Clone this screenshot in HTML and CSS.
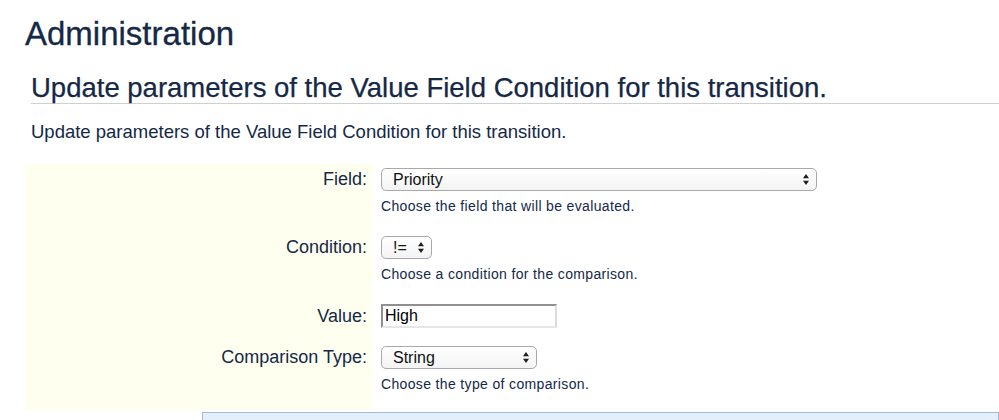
FILE: index.html
```html
<!DOCTYPE html>
<html lang="en">
<head>
<meta charset="utf-8">
<title>Administration</title>
<link rel="stylesheet" href="styles.css">
</head>
<body>
<div class="page">
  <h1 class="title">Administration</h1>
  <h2 class="subtitle">Update parameters of the Value Field Condition for this transition.</h2>
  <p class="intro">Update parameters of the Value Field Condition for this transition.</p>

  <div class="form">
    <div class="label">Field:</div>
    <div class="field">
      <div class="select select-wide"><span>Priority</span>
        <svg class="arrows" width="6" height="11" viewBox="0 0 6 11"><path d="M3 0 L6 4.2 L0 4.2 Z M0 6.8 L6 6.8 L3 11 Z" fill="#1e1e1e"/></svg>
      </div>
      <div class="desc">Choose the field that will be evaluated.</div>
    </div>

    <div class="label">Condition:</div>
    <div class="field">
      <div class="select select-small"><span>!=</span>
        <svg class="arrows" width="6" height="11" viewBox="0 0 6 11"><path d="M3 0 L6 4.2 L0 4.2 Z M0 6.8 L6 6.8 L3 11 Z" fill="#1e1e1e"/></svg>
      </div>
      <div class="desc">Choose a condition for the comparison.</div>
    </div>

    <div class="label label-input">Value:</div>
    <div class="field field-input">
      <div class="input">High</div>
    </div>

    <div class="label">Comparison Type:</div>
    <div class="field">
      <div class="select select-mid"><span>String</span>
        <svg class="arrows" width="6" height="11" viewBox="0 0 6 11"><path d="M3 0 L6 4.2 L0 4.2 Z M0 6.8 L6 6.8 L3 11 Z" fill="#1e1e1e"/></svg>
      </div>
      <div class="desc">Choose the type of comparison.</div>
    </div>
  </div>

  <div class="buttons"></div>
</div>
</body>
</html>
```

FILE: styles.css
```css
html, body {
  margin: 0;
  padding: 0;
  background: #ffffff;
  overflow: hidden;
}

body {
  font-family: "Liberation Sans", Arial, sans-serif;
  color: #172b4d;
}

.page {
  padding-left: 25px;
}

.title {
  margin: 14px 0 0 0;
  font-size: 33px;
  line-height: 40px;
  font-weight: normal;
  color: #142847;
  -webkit-text-stroke: 0.3px #142847;
}

.subtitle {
  margin: 18px 0 0 6px;
  font-size: 27.5px;
  line-height: 31px;
  font-weight: normal;
  color: #142847;
  -webkit-text-stroke: 0.25px #142847;
  border-bottom: 1px solid #cfcfcf;
}

.intro {
  margin: 17px 0 0 6px;
  font-size: 18.5px;
  line-height: 22px;
  color: #142847;
}

.form {
  margin-top: 21px;
  display: grid;
  grid-template-columns: 348px 1fr;
}

.label {
  background: #fffff0;
  text-align: right;
  padding: 4px 6px 18px 0;
  font-size: 18px;
  line-height: 23px;
  color: #142847;
}

.label-input {
  line-height: 24px;
  padding-bottom: 14px;
}

.field {
  padding: 4px 0 18px 8px;
}

.field-input {
  padding-bottom: 14px;
}

.select {
  box-sizing: border-box;
  height: 23px;
  display: flex;
  align-items: center;
  justify-content: space-between;
  padding: 0 7px 0 11px;
  border: 1px solid #a9a9a9;
  border-radius: 5px;
  background: linear-gradient(#ffffff, #f3f3f3);
  font-size: 16px;
  color: #111111;
}

.select-wide { width: 436px; }
.select-small { width: 51px; }
.select-mid { width: 156px; }

.arrows {
  display: block;
  flex: none;
}

.desc {
  margin-top: 7px;
  font-size: 14px;
  line-height: 16px;
  letter-spacing: 0.35px;
  color: #142847;
}

.input {
  box-sizing: border-box;
  width: 176px;
  height: 24px;
  padding: 0 0 0 2px;
  border-style: solid;
  border-width: 2px;
  border-color: #8f8f8f #dcdcdc #e6e6e6 #8f8f8f;
  font-size: 16px;
  line-height: 20px;
  color: #000000;
  background: #ffffff;
}

.buttons {
  margin: 2px 0 0 177px;
  height: 7px;
  border: 1px solid #a3badb;
  border-bottom: 0;
  background: #e4effc;
}
```
